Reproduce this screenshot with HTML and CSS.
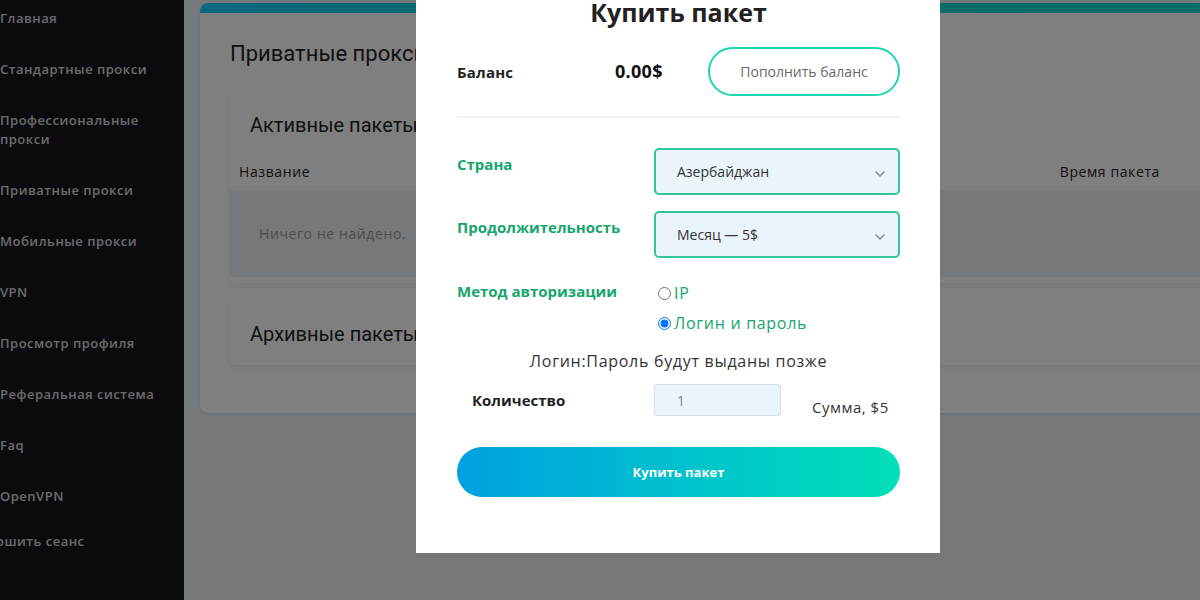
FILE: index.html
```html
<!DOCTYPE html>
<html lang="ru">
<head>
<meta charset="utf-8">
<title>Купить пакет</title>
<link rel="stylesheet" href="styles.css">
</head>
<body>
<div class="page">
  <aside class="sidebar">
    <nav class="nav">
      <a class="nav-item">Главная</a>
      <a class="nav-item">Стандартные прокси</a>
      <a class="nav-item">Профессиональные<br>прокси</a>
      <a class="nav-item">Приватные прокси</a>
      <a class="nav-item">Мобильные прокси</a>
      <a class="nav-item">VPN</a>
      <a class="nav-item">Просмотр профиля</a>
      <a class="nav-item">Реферальная система</a>
      <a class="nav-item">Faq</a>
      <a class="nav-item">OpenVPN</a>
      <a class="nav-item nav-item--logout">Завершить сеанс</a>
    </nav>
  </aside>
  <main class="main">
    <section class="card">
      <div class="card-bar"></div>
      <div class="card-body">
        <h1 class="card-title">Приватные прокси</h1>
        <div class="panel">
          <h2 class="panel-title">Активные пакеты</h2>
          <div class="table">
            <div class="table-head">
              <span>Название</span>
              <span>Время пакета</span>
            </div>
            <div class="table-empty">Ничего не найдено.</div>
          </div>
        </div>
        <div class="panel panel--archive">
          <h2 class="panel-title">Архивные пакеты</h2>
        </div>
      </div>
    </section>
  </main>
</div>

<div class="overlay">
  <div class="modal">
    <h2 class="modal-title">Купить пакет</h2>

    <div class="balance">
      <span class="balance-label">Баланс</span>
      <span class="balance-value">0.00$</span>
      <button class="btn-outline">Пополнить баланс</button>
    </div>

    <hr class="divider">

    <div class="form">
      <div class="form-row">
        <label class="form-label">Страна</label>
        <div class="select">
          <span>Азербайджан</span>
          <svg class="chevron" width="10" height="6" viewBox="0 0 10 6"><polyline points="1,1 5,5 9,1" fill="none" stroke="#8a8a8a" stroke-width="1.5" stroke-linecap="round" stroke-linejoin="round"/></svg>
        </div>
      </div>
      <div class="form-row">
        <label class="form-label">Продолжительность</label>
        <div class="select">
          <span>Месяц — 5$</span>
          <svg class="chevron" width="10" height="6" viewBox="0 0 10 6"><polyline points="1,1 5,5 9,1" fill="none" stroke="#8a8a8a" stroke-width="1.5" stroke-linecap="round" stroke-linejoin="round"/></svg>
        </div>
      </div>
      <div class="form-row form-row--auth">
        <label class="form-label form-label--auth">Метод авторизации</label>
        <div class="radios">
          <label class="radio"><input type="radio" name="auth">IP</label>
          <label class="radio"><input type="radio" name="auth" checked>Логин и пароль</label>
        </div>
      </div>
    </div>

    <p class="note">Логин:Пароль будут выданы позже</p>

    <div class="qty">
      <span class="qty-label">Количество</span>
      <div class="qty-input">1</div>
      <span class="qty-sum">Сумма, $5</span>
    </div>

    <button class="btn-buy">Купить пакет</button>
  </div>
</div>
</body>
</html>
```

FILE: styles.css
```css
* { box-sizing: border-box; }

html, body {
  margin: 0;
  height: 600px;
  overflow: hidden;
}

body {
  font-family: "Open Sans", "Noto Sans", sans-serif;
  color: #222;
}

.page {
  display: flex;
  width: 1260px;
  height: 600px;
}

/* Sidebar */
.sidebar {
  width: 184px;
  flex: 0 0 184px;
  background: #16161f;
  overflow: hidden;
}

.nav {
  display: flex;
  flex-direction: column;
  margin-top: -7px;
}

.nav-item {
  display: block;
  padding: 16px 0;
  font-size: 13px;
  line-height: 19px;
  font-weight: 600;
  letter-spacing: 0.5px;
  color: #d6d6d6;
  white-space: nowrap;
}

.nav-item--logout {
  margin-top: -6px;
  margin-left: -37px;
}

/* Main */
.main {
  flex: 1;
  background: #eaf2f8;
  padding: 3px 16px;
}

.card {
  background: #fff;
  border-radius: 8px;
  overflow: hidden;
  box-shadow: 0 1px 3px rgba(0,0,0,.1);
}

.card-bar {
  height: 10px;
  background: linear-gradient(90deg, #1ad2ff, #16d6d8 40%, #16dcd4);
}

.card-body {
  padding: 28px 30px 48px;
}

.card-title {
  margin: 0 0 28px;
  font-family: Roboto, "Liberation Sans", sans-serif;
  font-weight: 400;
  font-size: 22px;
  line-height: 26px;
  color: #222;
}

.panel {
  background: #fff;
  border-radius: 4px;
  box-shadow: 0 2px 6px rgba(0,0,0,.08);
  padding: 18px 0 6px;
}

.panel-title {
  margin: 0;
  padding: 0 20px;
  font-family: Roboto, "Liberation Sans", sans-serif;
  font-weight: 400;
  font-size: 20px;
  line-height: 24px;
  color: #222;
}

.table { margin-top: 15px; }

.table-head {
  display: flex;
  justify-content: space-between;
  padding: 10px 54px 8px 9px;
  font-size: 14px;
  line-height: 20px;
  letter-spacing: 0.6px;
  color: #222;
}

.table-empty {
  background: #eaf2f8;
  height: 87px;
  display: flex;
  align-items: center;
  padding-left: 29px;
  font-size: 14px;
  letter-spacing: 0.6px;
  color: #9a9a9a;
}

.panel--archive {
  margin-top: 19px;
  padding: 20px 0 19px;
}

/* Overlay + modal */
.overlay {
  position: fixed;
  inset: 0;
  background: rgba(0,0,0,.5);
}

.modal {
  position: absolute;
  left: 416px;
  top: -20px;
  width: 524px;
  background: #fff;
  padding: 20px 40px 56px 41px;
}

.modal-title {
  margin: 0;
  text-align: center;
  font-size: 25px;
  line-height: 24px;
  font-weight: 700;
  color: #222;
}

.balance {
  display: flex;
  align-items: center;
  margin-top: 23px;
}

.balance-label {
  width: 158px;
  font-size: 15px;
  font-weight: 700;
  letter-spacing: 0.2px;
  color: #222;
}

.balance-value {
  flex: 1;
  font-size: 18px;
  font-weight: 700;
  letter-spacing: 0.3px;
  color: #111;
  margin-top: -2px;
}

.btn-outline {
  width: 192px;
  height: 49px;
  border: 2px solid #1fd5b2;
  border-radius: 25px;
  background: #fff;
  font-family: inherit;
  font-size: 14px;
  color: #6a6a6a;
}

.divider {
  margin: 20px 0 0;
  border: 0;
  border-top: 2px solid #f1f2f3;
}

.form {
  margin-top: 30px;
  display: flex;
  flex-direction: column;
  gap: 16px;
}

.form-row {
  display: flex;
  align-items: flex-start;
}

.form-label {
  width: 197px;
  padding-top: 6px;
  font-size: 15px;
  line-height: 20px;
  font-weight: 700;
  color: #16a56b;
}

.form-label--auth { padding-top: 7px; }

.select {
  width: 246px;
  height: 47px;
  border: 2px solid #35c59d;
  border-radius: 5px;
  background: #eaf5fb;
  display: flex;
  align-items: center;
  justify-content: space-between;
  padding: 0 13px 0 21px;
  font-size: 14px;
  color: #333;
}

.chevron { margin-top: 4px; }

.radios {
  display: flex;
  flex-direction: column;
  margin-top: 4px;
}

.radio {
  display: flex;
  align-items: center;
  height: 30px;
  font-size: 16px;
  letter-spacing: 0.7px;
  color: #16a56b;
}

.radio input {
  width: 13px;
  height: 13px;
  margin: 0 3px 0 4px;
}

.note {
  margin: 12px 0 0;
  text-align: center;
  font-size: 16px;
  line-height: 22px;
  letter-spacing: 0.7px;
  color: #333;
}

.qty {
  display: flex;
  align-items: center;
  margin-top: 11px;
}

.qty-label {
  width: 197px;
  padding-left: 15px;
  font-size: 15px;
  font-weight: 700;
  color: #222;
}

.qty-input {
  width: 127px;
  height: 32px;
  border: 1px solid #d3e0e8;
  border-radius: 3px;
  background: #eaf5fb;
  padding-left: 22px;
  display: flex;
  align-items: center;
  font-size: 14px;
  color: #888;
}

.qty-sum {
  margin-left: 31px;
  margin-top: 14px;
  font-size: 15px;
  letter-spacing: 0.5px;
  color: #333;
}

.btn-buy {
  display: block;
  width: 100%;
  height: 50px;
  margin-top: 30px;
  border: 0;
  border-radius: 25px;
  background: linear-gradient(90deg, #00a0e0, #00c4cc 55%, #00e0b8);
  font-family: inherit;
  font-size: 13px;
  font-weight: 700;
  color: #fff;
}
```
